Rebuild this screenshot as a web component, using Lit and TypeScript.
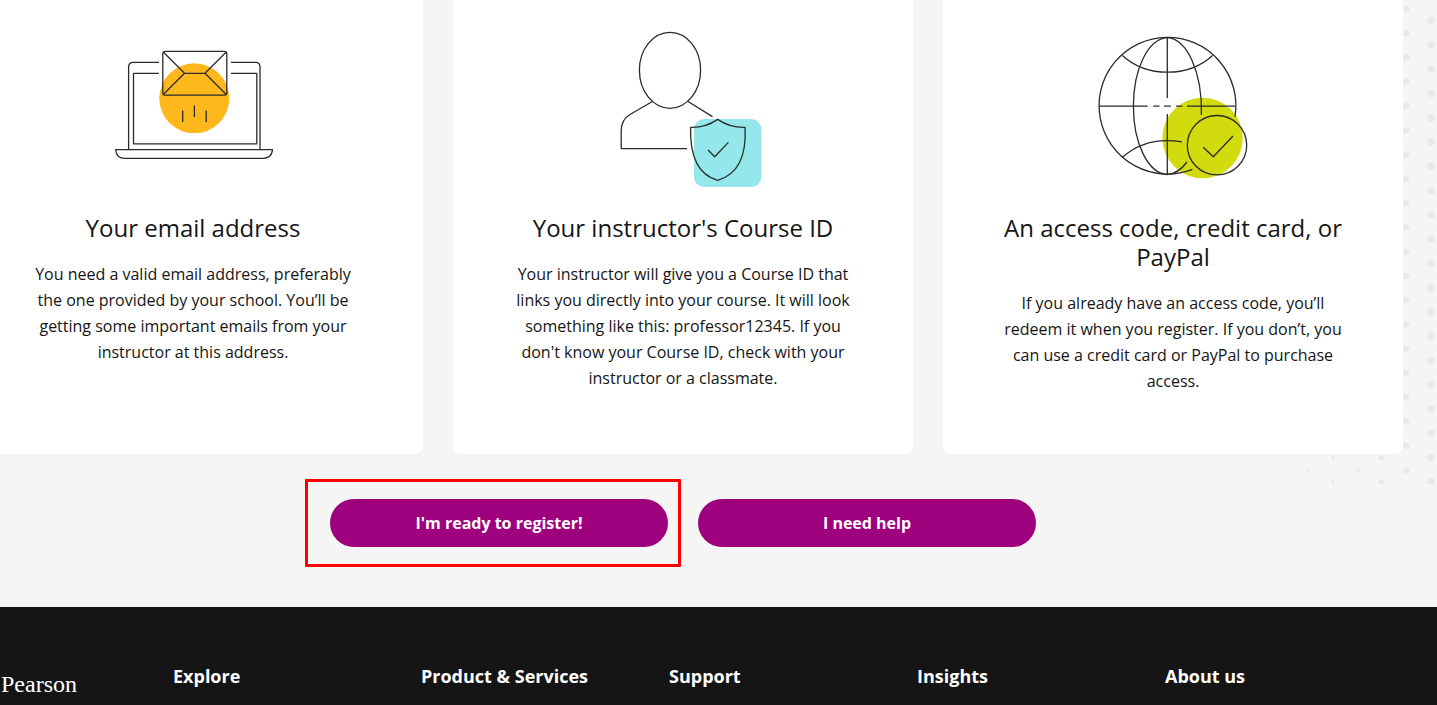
import { LitElement, html, svg, css } from "lit";
import { customElement } from "lit/decorators.js";

const emailArt = html`
  <svg class="art" viewBox="113 30 160 160" aria-hidden="true">
    <circle cx="194.3" cy="98.3" r="35" fill="#ffb81c" />
    <g class="ink">
      <path d="M159 62.3H133.5Q128.6 62.3 128.6 67V149.6M231 62.3H255.5Q260 62.3 260 67V149.6" />
      <path d="M159 73.3H133.5V143.8H256.8V73.3H231" />
      <path d="M115.6 149.7H272.6Q271.5 158.4 263 158.4H125Q116.5 158.4 115.6 149.7Z" />
      <rect x="162.8" y="51.4" width="64" height="43.8" rx="2.5" />
      <path d="M163.5 52.3L184.5 73.3H205L226 52.3M163.5 94.3L184.5 73.3M205 73.3L226 94.3" />
      <path d="M182.7 110.5V122M194.4 105.5V117M206.2 110.5V122" />
    </g>
  </svg>`;

const courseArt = html`
  <svg class="art" viewBox="603 30 160 160" aria-hidden="true">
    <rect x="694" y="119" width="67.4" height="68" rx="10" fill="#94e7ea" />
    <g class="ink">
      <ellipse cx="670" cy="70.3" rx="30.6" ry="38" />
      <path d="M652.8 101.2L630 114.5C624 118 621.2 123 621.2 131V148.6H687" />
      <path d="M687.6 101.2L712.5 116.6" />
      <path d="M717.7 119.4C709 125.5 700 127.6 690.6 127.4C689.8 156 697.5 174.5 717.7 180.3C738 174.5 746.6 156 745 127.4C735.5 127.6 726.5 125.5 717.7 119.4Z" />
      <path d="M708 150L714.7 156.8L728.4 142.4" />
    </g>
  </svg>`;

const accessArt = html`
  <svg class="art" viewBox="1093 30 160 160" aria-hidden="true">
    <circle cx="1202.6" cy="138" r="40.2" fill="#d2db0e" />
    <g class="ink">
      <path d="M1235 116.7A68.4 68.4 0 1 0 1192.4 169.4" />
      <path d="M1167.3 37.7V98M1167.3 114V174.6" />
      <path d="M1099 106.2H1147.6M1153.3 106.2H1159.5M1164 106.2H1170.8M1176 106.2H1182.4M1187 106.2H1235.6" />
      <path d="M1167.3 37.7C1148 39 1133.4 69 1133.4 106.2S1148 173.4 1167.3 174.6" />
      <path d="M1167.3 37.7C1187 39 1202.5 72 1201.4 115M1167.3 174.6C1175 174 1181 170 1187 162" />
      <path d="M1122.4 55.4C1147 77.8 1188 77.8 1212.6 55.4" />
      <path d="M1122.4 157.2C1139 142.5 1159 138 1182 141.8" />
      <circle cx="1217" cy="145.2" r="29.7" />
      <path d="M1203.2 147.2L1213.3 156.8L1233 136" />
    </g>
  </svg>`;

const cards = [
  {
    art: emailArt,
    title: "Your email address",
    body: "You need a valid email address, preferably the one provided by your school. You’ll be getting some important emails from your instructor at this address.",
  },
  {
    art: courseArt,
    title: "Your instructor's Course ID",
    body: "Your instructor will give you a Course ID that links you directly into your course. It will look something like this: professor12345. If you don't know your Course ID, check with your instructor or a classmate.",
  },
  {
    art: accessArt,
    title: "An access code, credit card, or PayPal",
    body: "If you already have an access code, you’ll redeem it when you register. If you don’t, you can use a credit card or PayPal to purchase access.",
  },
];

const footerColumns = ["Explore", "Product & Services", "Support", "Insights", "About us"];

// Halftone columns: centre x, radius, first centre y, number of dots.
const dotColumns = [
  { x: 8.6, r: 1.5, y: 470.2, n: 1 },
  { x: 32.7, r: 1.8, y: 457.5, n: 2 },
  { x: 57.4, r: 2.2, y: 470.2, n: 1 },
  { x: 81.2, r: 2.8, y: 457.5, n: 2 },
  { x: 106, r: 3.2, y: 8.8, n: 20 },
  { x: 130.7, r: 3.8, y: -3.7, n: 21 },
];
const dotPitch = 24.28;

@customElement("app-root")
export class AppRoot extends LitElement {
  static styles = css`
    :host {
      display: block;
      overflow: hidden;
      background: #151515;
      color: #151515;
      font-family: "Open Sans", "Noto Sans", sans-serif;
      font-size: 16px;
      line-height: 26px;
    }
    .checklist {
      position: relative;
      background: #f5f5f5;
      padding: 0 34px 60px 0;
    }
    .dots {
      position: absolute;
      top: 0;
      right: 0;
      width: 137px;
      height: 484px;
    }
    .cards {
      position: relative;
      display: grid;
      grid-template-columns: repeat(3, 1fr);
      gap: 30px;
      margin-left: -37px;
    }
    .card {
      background: #fff;
      border-radius: 0 0 8px 8px;
      padding: 30px 60px 60px;
      text-align: center;
    }
    .art {
      display: block;
      width: 160px;
      height: 160px;
      margin: 0 auto 23px;
    }
    .ink {
      fill: none;
      stroke: #2b2b2b;
      stroke-width: 1.3;
      stroke-linejoin: round;
    }
    h2 {
      margin: 0 0 19px;
      font-size: 24px;
      line-height: 29px;
      font-weight: 400;
    }
    p {
      margin: 0;
    }
    .actions {
      display: grid;
      grid-template-columns: repeat(2, 338px);
      justify-content: center;
      gap: 30px;
      margin: 45px 0 0 -37px;
    }
    .slot {
      position: relative;
      display: grid;
    }
    .highlight {
      position: absolute;
      inset: -20px -13px -20px -25px;
      border: 3px solid #fe0000;
      border-radius: 1px;
      pointer-events: none;
    }
    button {
      height: 48px;
      border: 0;
      border-radius: 24px;
      background: #9e007e;
      color: #fff;
      font: inherit;
      font-weight: 700;
      cursor: pointer;
    }
    footer {
      display: grid;
      grid-template-columns: 173px 1fr;
      padding-top: 56px;
      height: 42px;
      color: #fff;
    }
    .brand {
      padding: 8px 0 0 1px;
      color: #fff;
      font-family: "Liberation Serif", serif;
      font-size: 24px;
      text-decoration: none;
    }
    .columns {
      display: grid;
      grid-template-columns: repeat(5, 1fr);
      margin-right: 24px;
    }
    h3 {
      margin: 0;
      font-size: 18px;
      font-weight: 700;
    }
  `;

  render() {
    return html`
      <main class="checklist">
        <svg class="dots" viewBox="0 0 137 484" fill="#e9e9e9" aria-hidden="true">
          ${dotColumns.map((c) =>
            Array.from(
              { length: c.n },
              (_, i) => svg`<circle cx=${c.x + 0.3} cy=${c.y + i * dotPitch} r=${c.r} />`
            )
          )}
        </svg>
        <section class="cards">
          ${cards.map(
            (c) => html`<article class="card">
              ${c.art}
              <h2>${c.title}</h2>
              <p>${c.body}</p>
            </article>`
          )}
        </section>
        <div class="actions">
          <div class="slot">
            <button type="button">I'm ready to register!</button>
            <span class="highlight"></span>
          </div>
          <div class="slot">
            <button type="button">I need help</button>
          </div>
        </div>
      </main>
      <footer>
        <a class="brand" href="#">Pearson</a>
        <div class="columns">${footerColumns.map((t) => html`<h3>${t}</h3>`)}</div>
      </footer>
    `;
  }
}
